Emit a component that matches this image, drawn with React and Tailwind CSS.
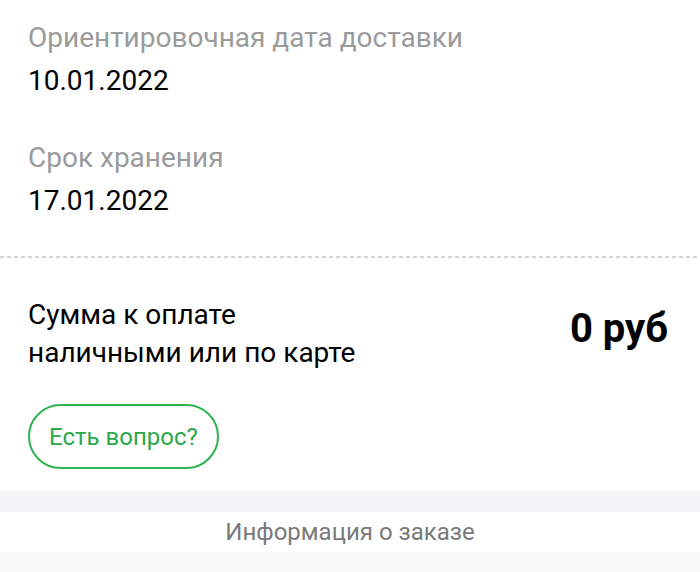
const DATES = [
  { label: "Ориентировочная дата доставки", value: "10.01.2022" },
  { label: "Срок хранения", value: "17.01.2022" },
];

export default function App() {
  return (
    <div className="min-h-[572px] w-[700px] bg-white font-['Roboto',sans-serif]">
      <div className="px-[28px] pt-[20px]">
        {DATES.map((d, i) => (
          <div key={d.label} className={i > 0 ? "mt-[41px]" : ""}>
            <div className="text-[28px] leading-[36px] text-[#9b9b9b]">
              {d.label}
            </div>
            <div className="mt-[7px] text-[28px] leading-[36px] text-black">
              {d.value}
            </div>
          </div>
        ))}
      </div>

      <div className="mt-[37px] h-[2px] w-full bg-[linear-gradient(to_right,#d4d4d4_4px,transparent_4px)] bg-[length:7px_2px]" />

      <div className="px-[28px] pt-[38px]">
        <div className="flex items-start justify-between">
          <div className="text-[28px] leading-[38px] text-black">
            Сумма к оплате
            <br />
            наличными или по карте
          </div>
          <div className="mt-[14px] mr-[4px] text-[40px] font-bold leading-[38px] text-black">
            0 руб
          </div>
        </div>
        <button
          type="button"
          className="mt-[32px] flex h-[65px] w-[191px] items-center justify-center rounded-full border-2 border-[#2db350] text-[24px] text-[#2aa84a]"
        >
          Есть вопрос?
        </button>
      </div>

      <div className="mt-[22px] h-[21px] bg-[#f4f5f7]" />
      <div className="flex h-[40px] items-center justify-center text-[24px] text-[#7a7a7a]">
        Информация о заказе
      </div>
      <div className="h-[20px] bg-[#fafafa]" />
    </div>
  );
}
